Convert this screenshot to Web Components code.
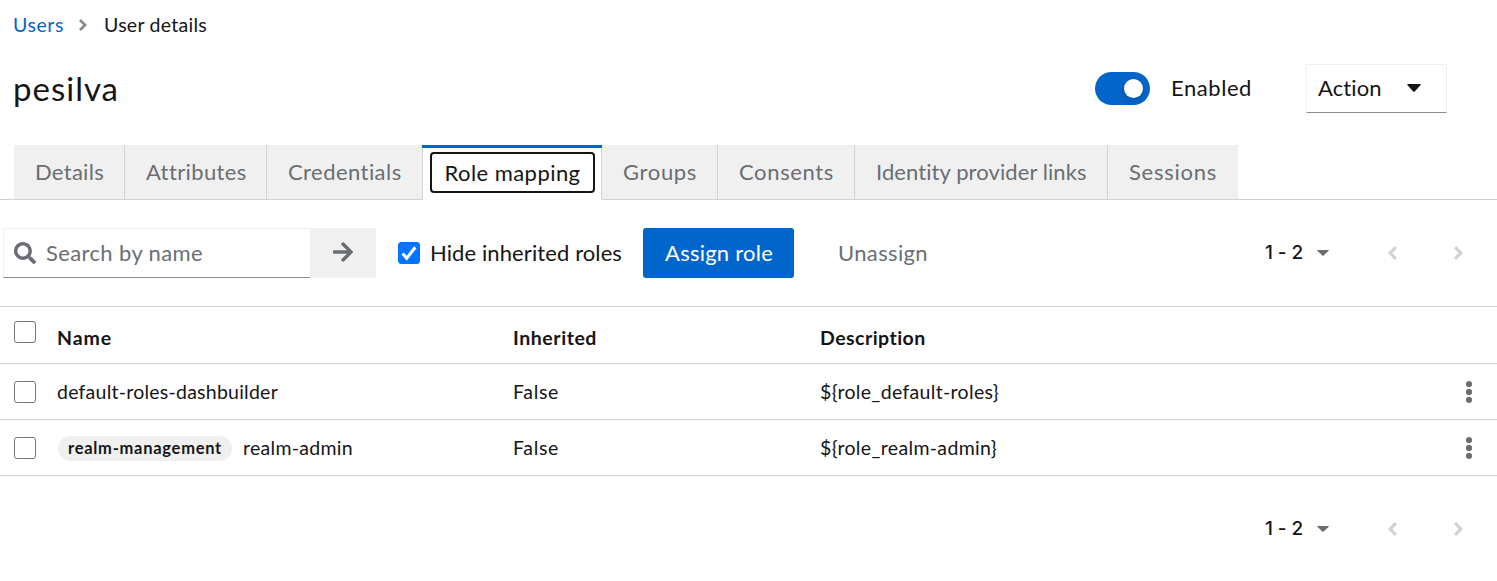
<!DOCTYPE html>
<html lang="en">
<head>
<meta charset="utf-8">
<title>User details</title>
<style>
body { margin: 0; background: #fff; color: #151515; font-family: Lato, "Liberation Sans", sans-serif; font-size: 22px; }
</style>
</head>
<body>
<user-page></user-page>
<script>
const define = (name, html, setup) => {
  const template = document.createElement('template');
  template.innerHTML = html;
  customElements.define(name, class extends HTMLElement {
    connectedCallback() {
      if (this.shadowRoot) return;
      this.attachShadow({ mode: 'open' }).append(template.content.cloneNode(true));
      if (setup) setup(this, this.shadowRoot);
    }
  });
};

/* One line of text, tracked so that its advance equals the w attribute. */
define('fit-text', `<style>
:host { display: block; white-space: pre; flex: none; line-height: 30px; }
span { display: inline-block; }
</style><span><slot></slot></span>`, (el, root) => {
  const w = parseFloat(el.getAttribute('w'));
  const span = root.querySelector('span');
  const natural = span.getBoundingClientRect().width;
  span.style.letterSpacing = (w - natural) / el.textContent.length + 'px';
  el.style.width = w + 'px';
});

define('ui-icon', `<style>
:host { display: block; flex: none; }
svg { display: block; width: 100%; height: 100%; fill: currentColor; }
</style><svg preserveAspectRatio="none"><path/></svg>`, (el, root) => {
  const icons = {
    angle: ['0 0 9 14', 'M0 2.2 2.2 0 9 7 2.2 14 0 11.8 4.6 7z'],
    caret: ['0 0 14 8', 'M1 0h12q1.4 0 .6 1.1L7.8 7.4q-.8.8-1.6 0L.4 1.1Q-.4 0 1 0z'],
    search: ['0 0 512 512', 'M505 442.7 405.3 343c-4.500-4.500-10.600-7-17-7H372c27.600-35.300 44-79.700 44-128C416 93.100 322.900 0 208 0S0 93.100 0 208s93.100 208 208 208c48.300 0 92.700-16.400 128-44v16.300c0 6.400 2.500 12.500 7 17l99.700 99.700c9.400 9.400 24.600 9.400 33.900 0l28.300-28.300c9.400-9.400 9.400-24.600.1-34zM208 336c-70.700 0-128-57.200-128-128 0-70.700 57.200-128 128-128 70.700 0 128 57.200 128 128 0 70.700-57.200 128-128 128z'],
    arrow: ['0 31 448 450', 'M190.500 66.900l22.200-22.200c9.400-9.400 24.600-9.400 33.900 0L441 239c9.400 9.400 9.400 24.600 0 33.900L246.600 467.300c-9.400 9.400-24.600 9.400-33.900 0l-22.200-22.200c-9.500-9.500-9.300-25 .4-34.300L311.400 296H24c-13.300 0-24-10.700-24-24v-32c0-13.300 10.700-24 24-24h287.400L190.900 101.200c-9.800-9.300-10-24.800-.4-34.300z'],
    kebab: ['0 0 6 22', 'M3 0a3 3 0 0 1 0 6.300A3 3 0 0 1 3 0zM3 7.850a3 3 0 0 1 0 6.300 3 3 0 0 1 0-6.300zM3 15.700a3 3 0 0 1 0 6.300 3 3 0 0 1 0-6.300z']
  };
  const [box, d] = icons[el.getAttribute('name')];
  root.querySelector('svg').setAttribute('viewBox', box);
  root.querySelector('path').setAttribute('d', d);
});

define('check-box', `<style>
:host { display: block; box-sizing: border-box; width: 22px; height: 22px; border: 1px solid #767676; border-radius: 3px; flex: none; background: #fff; }
:host([checked]) { background: #0075ff; border-color: #0075ff; }
svg { display: none; }
:host([checked]) svg { display: block; width: 20px; height: 20px; }
</style><svg viewBox="0 0 20 20"><path d="M3.600 10.600 7.700 15.300 16.300 4.300" fill="none" stroke="#fff" stroke-width="3.100"/></svg>`);

define('bread-crumb', `<style>
:host { display: flex; align-items: center; height: 50px; padding-left: 13px; font-size: 19.500px; }
.link { color: #06c; }
ui-icon { width: 8px; height: 12px; color: #8a8d90; margin: 0 17px 0 15px; }
</style><fit-text class="link" w="51">Users</fit-text><ui-icon name="angle"></ui-icon><fit-text w="103">User details</fit-text>`);

define('toggle-switch', `<style>
:host { display: flex; box-sizing: border-box; align-items: center; justify-content: flex-end; width: 55px; height: 33px; padding-right: 7px; border-radius: 17px; background: #06c; }
i { width: 19px; height: 19px; border-radius: 50%; background: #fff; box-shadow: 0 3px 10px rgba(0,0,0,.2); }
</style><i></i>`);

define('action-menu', `<style>
:host { display: flex; box-sizing: border-box; align-items: center; width: 141px; height: 49px; padding-left: 11px; border: 1px solid #f0f0f0; border-bottom-color: #8a8d90; }
ui-icon { width: 14px; height: 8px; margin-left: 25px; }
</style><fit-text w="64">Action</fit-text><ui-icon name="caret"></ui-icon>`);

define('page-header', `<style>
:host { display: flex; align-items: center; height: 76px; padding: 0 50px 0 13px; }
h1 { margin: 0 auto 0 0; font-size: 33px; font-weight: 400; }
fit-text.on { margin: 0 54px 0 21px; }
</style><h1><fit-text w="106">pesilva</fit-text></h1><toggle-switch></toggle-switch><fit-text class="on" w="81">Enabled</fit-text><action-menu></action-menu>`);

define('tab-item', `<style>
:host { display: flex; box-sizing: border-box; align-items: center; height: 55px; padding-left: 21px; background: #f0f0f0; color: #6a6e73; border-right: 1px solid #d2d2d2; border-bottom: 1px solid #d2d2d2; flex: none; }
:host([last]) { border-right: 0; }
:host([active]) { background: #fff; color: #151515; border-bottom-color: #fff; box-shadow: 0 3px #06c inset, -1px 0 #d2d2d2; position: relative; padding-left: 7px; }
:host([active])::before { content: ""; position: absolute; left: -1px; right: -1px; top: 0; height: 3px; background: #06c; }
:host([active]) div { box-sizing: border-box; width: 165px; height: 41px; border: 2px solid #151515; border-radius: 4px; padding: 4px 0 0 12.500px; }
</style><div><slot></slot></div>`, el => { el.style.width = el.getAttribute('width') + 'px'; });

define('tab-bar', `<style>
:host { display: flex; margin-top: 19px; height: 55px; padding-left: 14px; background: linear-gradient(#d2d2d2, #d2d2d2) 0 100% / 100% 1px no-repeat; }
</style>
<tab-item width="111"><fit-text w="69">Details</fit-text></tab-item>
<tab-item width="142"><fit-text w="100">Attributes</fit-text></tab-item>
<tab-item width="156"><fit-text w="114">Credentials</fit-text></tab-item>
<tab-item width="179" active><fit-text w="136">Role mapping</fit-text></tab-item>
<tab-item width="116"><fit-text w="74">Groups</fit-text></tab-item>
<tab-item width="137"><fit-text w="95">Consents</fit-text></tab-item>
<tab-item width="253"><fit-text w="211">Identity provider links</fit-text></tab-item>
<tab-item width="130" last><fit-text w="88">Sessions</fit-text></tab-item>`);

define('search-box', `<style>
:host { display: flex; width: 373px; height: 50px; color: #6a6e73; }
.field { display: flex; align-items: center; box-sizing: border-box; width: 307px; padding-left: 10px; border: 1px solid #f0f0f0; border-right: 0; border-bottom-color: #8a8d90; }
.field ui-icon { width: 22px; height: 22px; margin-right: 10px; }
.go { display: flex; align-items: center; justify-content: center; width: 66px; background: #f0f0f0; }
.go ui-icon { width: 20px; height: 20px; margin-bottom: 2px; }
</style><div class="field"><ui-icon name="search"></ui-icon><fit-text w="157">Search by name</fit-text></div><div class="go"><ui-icon name="arrow"></ui-icon></div>`);

define('page-nav', `<style>
:host { display: flex; align-items: center; height: 50px; padding-right: 34px; margin-left: auto; font: 500 19px Inter, sans-serif; }
.caret { width: 12px; height: 6px; margin: 0 59px 0 14px; color: #6a6e73; }
.prev, .next { width: 9px; height: 14px; color: #d2d2d2; }
.prev { transform: scaleX(-1); margin-right: 57px; }
</style><fit-text w="38">1 - 2</fit-text><ui-icon class="caret" name="caret"></ui-icon><ui-icon class="prev" name="angle"></ui-icon><ui-icon class="next" name="angle"></ui-icon>`);

define('role-toolbar', `<style>
:host { display: flex; align-items: center; height: 50px; padding: 28px 0 28px 3px; }
check-box { margin: 0 10px 0 22px; }
.assign { box-sizing: border-box; width: 151px; height: 50px; padding: 10px 0 0 22px; margin: 0 44px 0 21px; border-radius: 3px; background: #06c; color: #fff; }
.off { color: #6a6e73; }
</style><search-box></search-box><check-box checked></check-box><fit-text w="192">Hide inherited roles</fit-text><div class="assign"><fit-text w="108">Assign role</fit-text></div><fit-text class="off" w="90">Unassign</fit-text><page-nav></page-nav>`);

define('role-row', `<style>
:host { display: grid; grid-template-columns: 43px 456px 307px 1fr 31px; align-items: center; height: 55px; padding-left: 14px; border-bottom: 1px solid #d2d2d2; font-size: 19.500px; }
:host([head]) { height: 56px; border-top: 1px solid #d2d2d2; font-weight: 700; }
:host([head]) check-box { margin-bottom: 6px; }
:host([head]) ::slotted(*) { margin-top: 5px; }
ui-icon { width: 6px; height: 22px; color: #6a6e73; }
:host([head]) ui-icon { visibility: hidden; }
</style><check-box></check-box><slot></slot><ui-icon name="kebab"></ui-icon>`);

define('role-name', `<style>
:host { display: flex; align-items: center; }
.badge { box-sizing: border-box; width: 174px; height: 25px; margin: 1px 11px 0 1px; padding: 0 0 0 10px; border-radius: 13px; background: #f0f0f0; font-size: 16.500px; font-weight: 700; }
.badge fit-text { line-height: 25px; }
</style><div class="badge"><fit-text w="154">realm-management</fit-text></div><fit-text w="110">realm-admin</fit-text>`);

define('user-page', `<style>
:host { display: block; width: 1497px; height: 581px; overflow: hidden; }
.foot { display: flex; padding-top: 28px; }
</style>
<bread-crumb></bread-crumb>
<page-header></page-header>
<tab-bar></tab-bar>
<role-toolbar></role-toolbar>
<role-row head><fit-text w="55">Name</fit-text><fit-text w="84">Inherited</fit-text><fit-text w="106">Description</fit-text></role-row>
<role-row><fit-text w="221">default-roles-dashbuilder</fit-text><fit-text w="46">False</fit-text><fit-text w="179">\${role_default-roles}</fit-text></role-row>
<role-row><role-name></role-name><fit-text w="46">False</fit-text><fit-text w="177">\${role_realm-admin}</fit-text></role-row>
<div class="foot"><page-nav></page-nav></div>`);
</script>
</body>
</html>
